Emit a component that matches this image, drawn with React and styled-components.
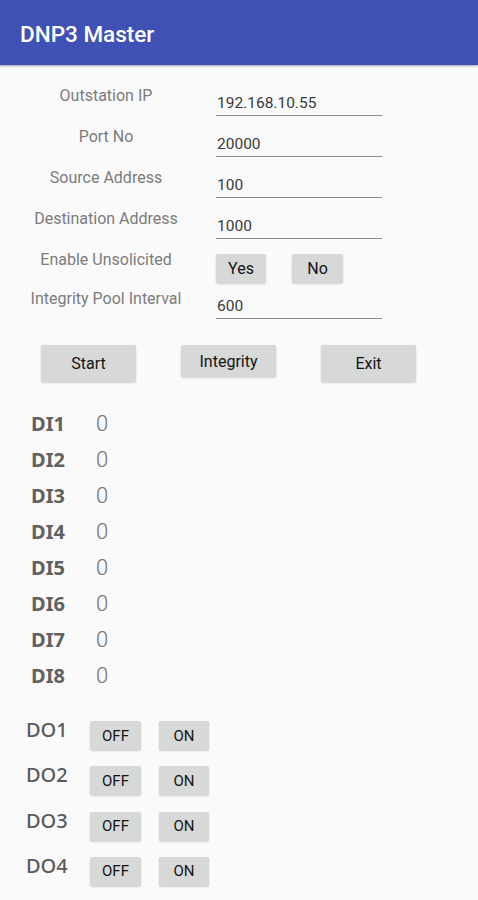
import React from 'react';
import styled, { createGlobalStyle } from 'styled-components';

const GlobalStyle = createGlobalStyle`
body{
    margin:0;
    background-color:#fafafa;
    font-family: Roboto, "Liberation Sans", sans-serif;
}
`

const Screen = styled.div`
width:478px;
min-height:900px;
background-color:#fafafa;
`

const AppBar = styled.header`
height:65px;
display:flex;
align-items:center;
padding-left:20px;
background-color:#3f51b5;
box-shadow: 0 1px 2px rgba(0,0,0,0.35);
`

const Title = styled.h1`
margin:0;
margin-top:2px;
font-family: Roboto, sans-serif;
font-size:22.5px;
font-weight:500;
color:white;
`

const Form = styled.div`
margin-top:14px;
`

const FormRow = styled.div`
display:grid;
grid-template-columns: 212px 166px;
column-gap:4px;
height:${props => props.height || 41}px;
`

const Label = styled.span`
padding-top:7px;
text-align:center;
font-size:16px;
line-height:20px;
color:#7c7c7c;
white-space:nowrap;
`

const Field = styled.div`
margin-top:14px;
height:20px;
padding:0 0 2px 1px;
font-size:15.5px;
line-height:20px;
color:#3a3a3a;
border-bottom:1px solid #8c8c8c;
`

const Choices = styled.div`
display:flex;
gap:26px;
padding-top:11px;
`

const Button = styled.button`
width:${props => props.width || 50}px;
height:${props => props.height || 29}px;
padding:0;
border:none;
border-radius:2px;
background-color:#d7d8d8;
box-shadow: 0 1px 2px rgba(0,0,0,0.18);
font-family: Roboto, sans-serif;
font-size:${props => props.size || 15}px;
font-weight:400;
color:#141414;
`

const Actions = styled.div`
display:flex;
align-items:flex-start;
gap:45px;
margin-top:22px;
padding-left:41px;
`

const InputList = styled.div`
margin-top:23px;
padding-left:31px;
`

const InputRow = styled.div`
display:flex;
height:36px;
align-items:center;
`

const InputName = styled.span`
width:65px;
font-family: "Noto Sans", sans-serif;
font-size:20px;
font-weight:700;
color:#616161;
`

const InputValue = styled.span`
font-family: Roboto, sans-serif;
font-size:22px;
font-weight:300;
color:#707070;
`

const OutputList = styled.div`
margin-top:18px;
padding-left:26px;
`

const OutputRow = styled.div`
display:flex;
align-items:flex-start;
height:45.3px;
`

const OutputName = styled.span`
width:64px;
padding-top:7px;
font-family: "Noto Sans", sans-serif;
font-size:20px;
line-height:24px;
font-weight:500;
color:#5a5a5a;
`

const OutputButtons = styled.div`
display:flex;
gap:18px;
padding-top:10px;
`

const fields = [
    { label: "Outstation IP", value: "192.168.10.55" },
    { label: "Port No", value: "20000" },
    { label: "Source Address", value: "100" },
    { label: "Destination Address", value: "1000" },
]

const inputs = ["DI1", "DI2", "DI3", "DI4", "DI5", "DI6", "DI7", "DI8"]
const outputs = ["DO1", "DO2", "DO3", "DO4"]

export default function App(){
    return(
        <Screen>
            <GlobalStyle/>
            <AppBar>
                <Title>DNP3 Master</Title>
            </AppBar>
            <Form>
                {fields.map(f =>
                    <FormRow key={f.label}>
                        <Label>{f.label}</Label>
                        <Field>{f.value}</Field>
                    </FormRow>
                )}
                <FormRow height={39}>
                    <Label>Enable Unsolicited</Label>
                    <Choices>
                        <Button width={50} size={16}>Yes</Button>
                        <Button width={51} size={16}>No</Button>
                    </Choices>
                </FormRow>
                <FormRow>
                    <Label>Integrity Pool Interval</Label>
                    <Field>600</Field>
                </FormRow>
            </Form>
            <Actions>
                <Button width={95} height={37} size={16}>Start</Button>
                <Button width={95} height={32} size={16}>Integrity</Button>
                <Button width={95} height={37} size={16}>Exit</Button>
            </Actions>
            <InputList>
                {inputs.map(name =>
                    <InputRow key={name}>
                        <InputName>{name}</InputName>
                        <InputValue>0</InputValue>
                    </InputRow>
                )}
            </InputList>
            <OutputList>
                {outputs.map(name =>
                    <OutputRow key={name}>
                        <OutputName>{name}</OutputName>
                        <OutputButtons>
                            <Button width={51}>OFF</Button>
                            <Button width={50}>ON</Button>
                        </OutputButtons>
                    </OutputRow>
                )}
            </OutputList>
        </Screen>
    )
}
